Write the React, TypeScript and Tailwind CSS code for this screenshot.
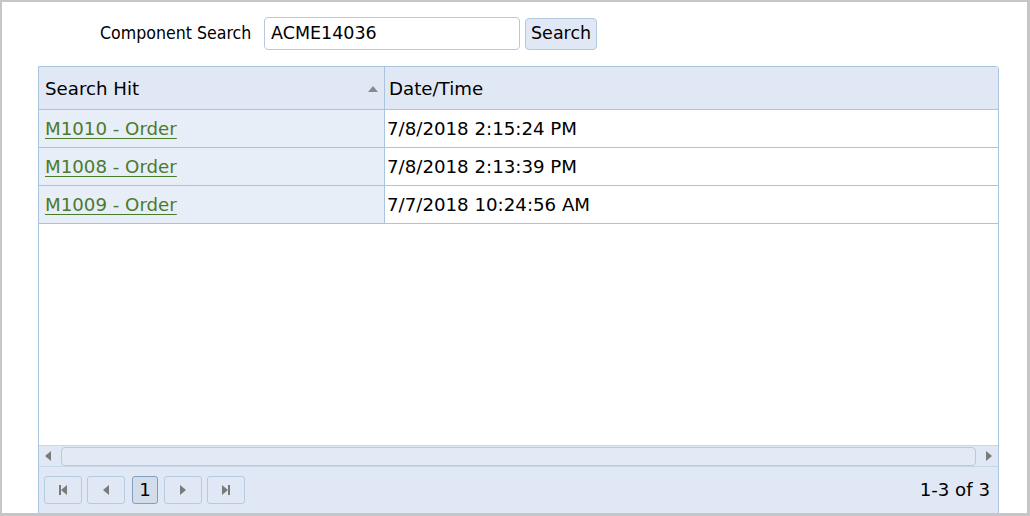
const rows = [
  { hit: 'M1010 - Order', time: '7/8/2018 2:15:24 PM' },
  { hit: 'M1008 - Order', time: '7/8/2018 2:13:39 PM' },
  { hit: 'M1009 - Order', time: '7/7/2018 10:24:56 AM' },
];

function Tri({ dir }: { dir: 'left' | 'right' }) {
  return (
    <svg width="6" height="10" viewBox="0 0 6 10" className="fill-[#7a7a7a]">
      {dir === 'left' ? <path d="M6 0 L0 5 L6 10 Z" /> : <path d="M0 0 L6 5 L0 10 Z" />}
    </svg>
  );
}

function PagerButton({ children }: { children: React.ReactNode }) {
  return (
    <button className="flex h-[28px] w-[38px] items-center justify-center rounded-[3px] border border-[#b4cbe0] bg-[#e1e8f5]">
      {children}
    </button>
  );
}

export default function App() {
  return (
    <div className="h-[516px] w-[1030px] overflow-hidden border-t-2 border-l-2 border-r-[3px] border-b-[3px] border-[#c6c6c6] bg-white font-['DejaVu_Sans',sans-serif] text-black">
      <div className="flex h-[64px] items-center pb-[2px]">
        <label className="ml-[98px] w-[164px] font-['DejaVu_Sans_Condensed','DejaVu_Sans',sans-serif] text-[17.6px]">
          Component Search
        </label>
        <input
          defaultValue="ACME14036"
          className="h-[33px] w-[256px] rounded-[4px] border border-[#b3c9df] px-[6px] text-[17.5px] outline-none"
        />
        <button className="ml-[5px] mt-[1px] h-[32px] rounded-[4px] border border-[#b3c9df] bg-[#e1e8f5] px-[5px] text-[17.5px]">
          Search
        </button>
      </div>

      <div className="ml-[36px] flex h-[448px] w-[961px] flex-col rounded-tr-[3px] border border-[#a9c4dd] bg-white text-[18.2px]">
        <div className="flex h-[43px] border-b border-[#a9c4dd] bg-[#e1e8f5]">
          <div className="flex w-[346px] items-center justify-between border-r border-[#a9c4dd] pl-[6px] pr-[6px] pt-[1px]">
            <span>Search Hit</span>
            <svg width="10" height="6" viewBox="0 0 10 6" className="fill-[#8a8a8a]">
              <path d="M0 6 L5 0 L10 6 Z" />
            </svg>
          </div>
          <div className="flex items-center pl-[4px] pt-[1px]">Date/Time</div>
        </div>

        {rows.map((r) => (
          <div key={r.hit} className="flex h-[38px] border-b border-[#a9c4dd]">
            <div className="flex w-[346px] items-center border-r border-[#a9c4dd] bg-[#e8eef7] pl-[6px] pt-[1px]">
              <a href="#" className="text-[#4a7b2b] underline underline-offset-[3px]">
                {r.hit}
              </a>
            </div>
            <div className="flex items-center pl-[2px] pt-[1px]">{r.time}</div>
          </div>
        ))}

        <div className="flex-1" />

        <div className="flex h-[22px] items-center border-t border-b border-[#c9d8e8] bg-[#e1e8f5] px-[6px]">
          <Tri dir="left" />
          <div className="mx-[10px] h-[19px] flex-1 rounded-[4px] border border-[#b4cbe0] bg-[#e3eaf6]" />
          <Tri dir="right" />
        </div>

        <div className="flex h-[46px] items-center justify-between bg-[#e1e8f5] pl-[5px] pr-[8px]">
          <div className="flex items-center gap-[5px]">
            <PagerButton>
              <svg width="8" height="10" viewBox="0 0 8 10" className="fill-[#7a7a7a]">
                <rect x="0" y="0" width="2" height="10" />
                <path d="M8 0 L2 5 L8 10 Z" />
              </svg>
            </PagerButton>
            <PagerButton>
              <Tri dir="left" />
            </PagerButton>
            <button className="ml-[2px] mr-[1px] flex h-[28px] w-[26px] items-center justify-center rounded-[3px] border border-[#7f9fc0] bg-[#d2dde9]">
              1
            </button>
            <PagerButton>
              <Tri dir="right" />
            </PagerButton>
            <PagerButton>
              <svg width="8" height="10" viewBox="0 0 8 10" className="fill-[#7a7a7a]">
                <path d="M0 0 L6 5 L0 10 Z" />
                <rect x="6" y="0" width="2" height="10" />
              </svg>
            </PagerButton>
          </div>
          <span>1-3 of 3</span>
        </div>
      </div>
    </div>
  );
}
